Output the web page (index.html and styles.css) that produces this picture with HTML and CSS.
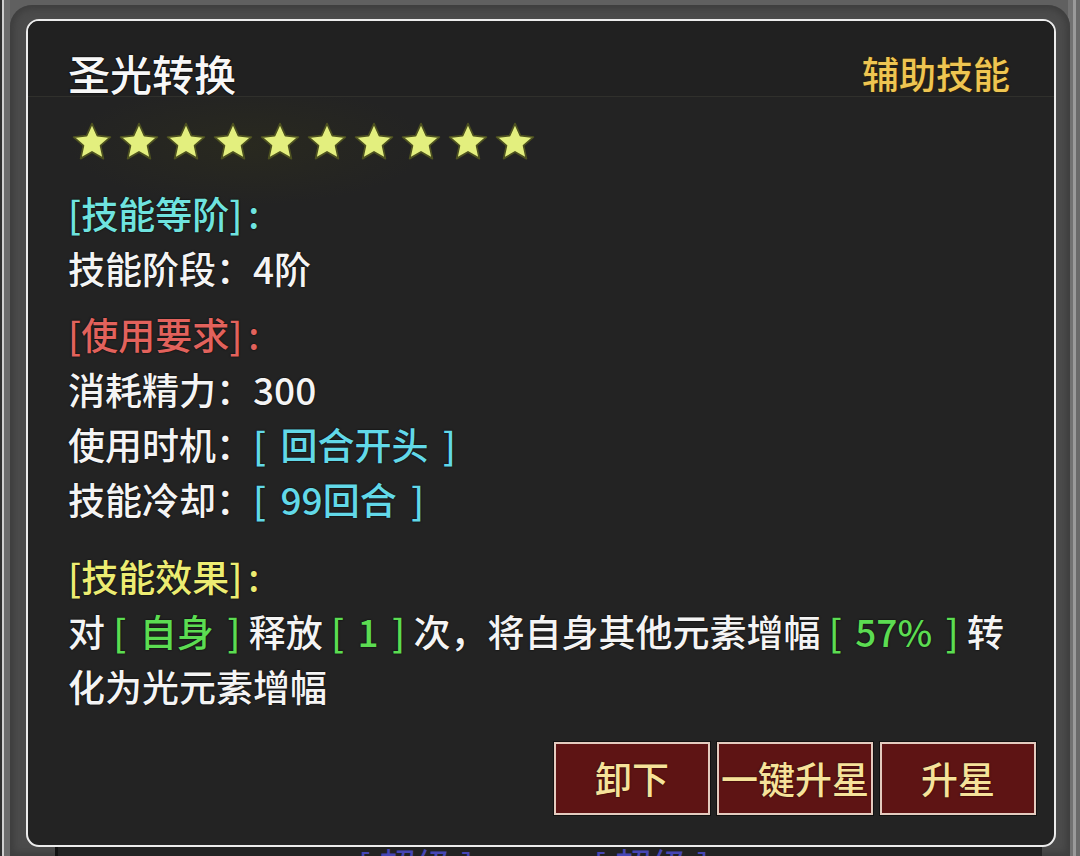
FILE: index.html
```html
<!DOCTYPE html>
<html lang="zh-CN">
<head>
<meta charset="utf-8">
<title>圣光转换</title>
<link rel="stylesheet" href="styles.css">
</head>
<body>
<div class="frame">
  <div class="panel">
    <div class="head">
      <div class="title">圣光转换</div>
      <div class="tag">辅助技能</div>
    </div>
    <div class="content">
      <div class="stars">
        <svg class="star" viewBox="0 0 24 24"><polygon points="12,1.5 15.1,8.4 22.5,9.2 16.9,14.1 18.5,21.5 12,17.7 5.5,21.5 7.1,14.1 1.5,9.2 8.9,8.4"/></svg>
        <svg class="star" viewBox="0 0 24 24"><polygon points="12,1.5 15.1,8.4 22.5,9.2 16.9,14.1 18.5,21.5 12,17.7 5.5,21.5 7.1,14.1 1.5,9.2 8.9,8.4"/></svg>
        <svg class="star" viewBox="0 0 24 24"><polygon points="12,1.5 15.1,8.4 22.5,9.2 16.9,14.1 18.5,21.5 12,17.7 5.5,21.5 7.1,14.1 1.5,9.2 8.9,8.4"/></svg>
        <svg class="star" viewBox="0 0 24 24"><polygon points="12,1.5 15.1,8.4 22.5,9.2 16.9,14.1 18.5,21.5 12,17.7 5.5,21.5 7.1,14.1 1.5,9.2 8.9,8.4"/></svg>
        <svg class="star" viewBox="0 0 24 24"><polygon points="12,1.5 15.1,8.4 22.5,9.2 16.9,14.1 18.5,21.5 12,17.7 5.5,21.5 7.1,14.1 1.5,9.2 8.9,8.4"/></svg>
        <svg class="star" viewBox="0 0 24 24"><polygon points="12,1.5 15.1,8.4 22.5,9.2 16.9,14.1 18.5,21.5 12,17.7 5.5,21.5 7.1,14.1 1.5,9.2 8.9,8.4"/></svg>
        <svg class="star" viewBox="0 0 24 24"><polygon points="12,1.5 15.1,8.4 22.5,9.2 16.9,14.1 18.5,21.5 12,17.7 5.5,21.5 7.1,14.1 1.5,9.2 8.9,8.4"/></svg>
        <svg class="star" viewBox="0 0 24 24"><polygon points="12,1.5 15.1,8.4 22.5,9.2 16.9,14.1 18.5,21.5 12,17.7 5.5,21.5 7.1,14.1 1.5,9.2 8.9,8.4"/></svg>
        <svg class="star" viewBox="0 0 24 24"><polygon points="12,1.5 15.1,8.4 22.5,9.2 16.9,14.1 18.5,21.5 12,17.7 5.5,21.5 7.1,14.1 1.5,9.2 8.9,8.4"/></svg>
        <svg class="star" viewBox="0 0 24 24"><polygon points="12,1.5 15.1,8.4 22.5,9.2 16.9,14.1 18.5,21.5 12,17.7 5.5,21.5 7.1,14.1 1.5,9.2 8.9,8.4"/></svg>
      </div>

      <div class="sec sec-grade">
        <div class="line h-cyan">[技能等阶]<span class="colon">:</span></div>
        <div class="line">技能阶段：4阶</div>
      </div>

      <div class="sec sec-req">
        <div class="line h-red">[使用要求]<span class="colon">:</span></div>
        <div class="line">消耗精力：300</div>
        <div class="line">使用时机：<span class="v-cyan">[ 回合开头 ]</span></div>
        <div class="line">技能冷却：<span class="v-cyan">[ 99回合 ]</span></div>
      </div>

      <div class="sec sec-effect">
        <div class="line h-yellow">[技能效果]<span class="colon">:</span></div>
        <div class="line">对 <span class="v-green">[ 自身 ]</span> 释放 <span class="v-green">[ 1 ]</span> 次<span class="comma">，</span>将自身其他元素增幅 <span class="v-green">[ 57% ]</span> 转</div>
        <div class="line">化为光元素增幅</div>
      </div>

      <div class="btns">
        <div class="btn">卸下</div>
        <div class="btn">一键升星</div>
        <div class="btn">升星</div>
      </div>
    </div>
  </div>
  <div class="under">
    <span class="u1">[ 超级 ]</span><span class="u2">[ 超级 ]</span>
  </div>
</div>
</body>
</html>
```

FILE: styles.css
```css
html, body {
  margin: 0;
  padding: 0;
  height: 100%;
  overflow: hidden;
}

body {
  font-family: "Noto Sans CJK SC", "Noto Sans", sans-serif;
  background: linear-gradient(to right,
    #2e2e2e 0, #2e2e2e 2px,
    #cfcfcf 2px, #cfcfcf 4px,
    #6c6c6c 4px, #6c6c6c 10px,
    #606060 10px, #606060 1068px,
    #727272 1068px, #727272 1073px,
    #9a9a9a 1073px, #9a9a9a 1076px,
    #6a6a6a 1076px);
}

.frame {
  margin: 5px 10px 0 10px;
  padding: 14px 14px 0 16px;
  height: 851px;
  box-sizing: border-box;
  border-radius: 22px 22px 0 0;
  background: #4b4b4b;
  box-shadow: inset 0 0 6px 4px #3e3e3e;
}

.panel {
  width: 1030px;
  height: 828px;
  box-sizing: border-box;
  border: 2px solid #ececec;
  border-radius: 13px;
  background: #232323;
  overflow: hidden;
}

.head {
  height: 75px;
  display: flex;
  align-items: flex-end;
  justify-content: space-between;
  padding: 0 44px 0 40px;
  border-bottom: 1px solid #30302c;
  background: #212121;
}

.title {
  font-size: 42px;
  line-height: 46px;
  font-weight: 500;
  color: #f7f7f7;
  text-shadow: 0 0 2px #000, 0 0 1px #000;
}

.tag {
  font-size: 37px;
  line-height: 46px;
  font-weight: 500;
  color: #eec552;
  text-shadow: 0 0 2px #3a2a00, 0 0 1px #2a1e00;
}

.content {
  padding: 0 18px 0 40px;
  background: radial-gradient(ellipse 180px 60px at 220px 48px, #29291f, rgba(35,35,35,0));
}

.stars {
  display: flex;
  gap: 5px;
  padding-top: 24px;
  margin-left: 3px;
}

.star {
  width: 42px;
  height: 42px;
  display: block;
}

.star polygon {
  fill: #e3ef7e;
  stroke: #4d5120;
  stroke-width: 1;
  stroke-linejoin: round;
}

.sec .line {
  font-size: 37px;
  line-height: 55px;
  font-weight: 500;
  color: #f4f4f4;
  text-shadow: 0 0 2px #000;
  white-space: nowrap;
}

.comma {
  letter-spacing: -8px;
  margin-right: 8px;
}

.colon {
  margin-left: 6px;
}

.sec-grade { margin-top: 23px; }
.sec-req { margin-top: 11px; }
.sec-effect { margin-top: 22px; }

.h-cyan { color: #6fe3df !important; }
.h-red { color: #e2625c !important; }
.h-yellow { color: #ecec72 !important; }
.v-cyan { color: #62d8e8; word-spacing: 6px; }
.v-green { color: #5cdc52; word-spacing: 5px; }

.btns {
  display: flex;
  justify-content: flex-end;
  gap: 7px;
  margin-top: 28px;
}

.btn {
  width: 156px;
  height: 73px;
  box-sizing: border-box;
  border: 2px solid #e4cbbf;
  box-shadow: 0 0 0 1px #111;
  background: #5e1414;
  color: #f6e29a;
  font-size: 37px;
  font-weight: 500;
  line-height: 69px;
  text-align: center;
  white-space: nowrap;
  text-shadow: 0 0 2px #1a0000;
}

.under {
  height: 9px;
  margin-left: 29px;
  margin-right: 14px;
  border-left: 3px solid #111;
  background: #222;
  overflow: hidden;
  font-size: 37px;
  line-height: 37px;
  color: #4646b4;
  white-space: nowrap;
}

.u1 { margin-left: 300px; }
.u2 { margin-left: 120px; }
```
